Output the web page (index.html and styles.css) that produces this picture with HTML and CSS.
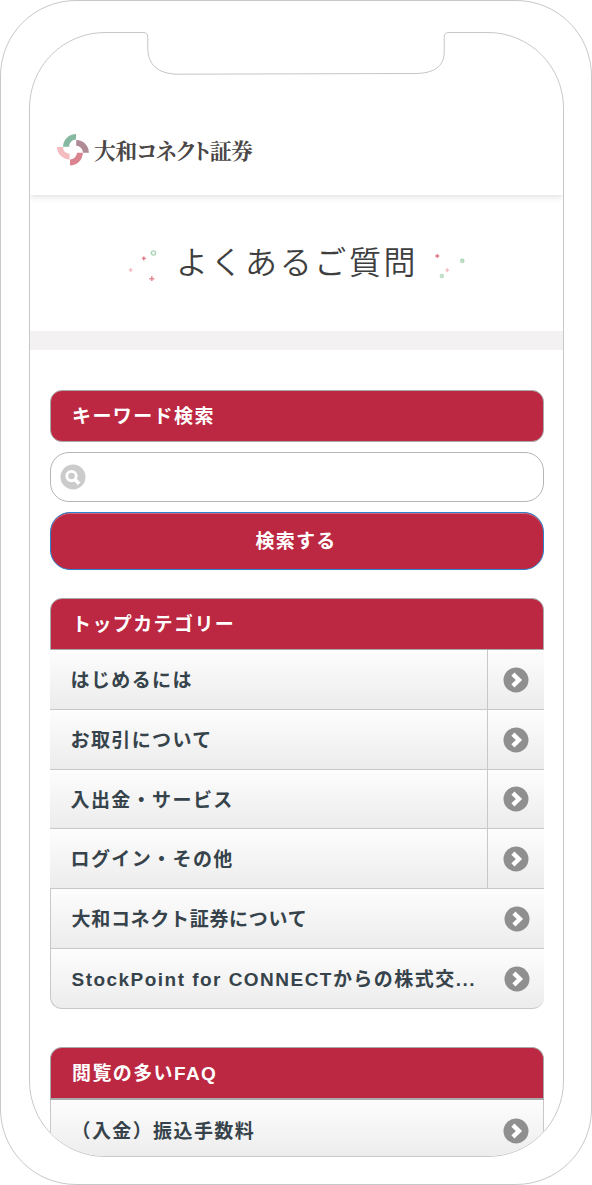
FILE: index.html
```
<!DOCTYPE html>
<html lang="ja">
<head>
    <meta charset="UTF-8">
    <meta name="viewport" content="width=device-width, initial-scale=1.0">
    <title>よくあるご質問</title>
    <link rel="stylesheet" href="styles.css">
</head>
<body>
    <svg class="symbols" width="0" height="0">
        <symbol id="arrow" viewBox="0 0 26 26">
            <circle cx="13" cy="13" r="12.5" fill="#8f8f8f"/>
            <path d="M9.9 7.2L15.9 13L9.9 18.8" fill="none" stroke="#fff" stroke-width="4.4"/>
        </symbol>
    </svg>

    <div class="phone">
        <div class="screen">
            <header class="header">
                <svg class="logo-mark" width="32" height="32" viewBox="0 0 32 32">
                    <path d="M6 12.8A13 13 0 0 1 19 0V5.6A7.2 7.2 0 0 0 12 12.8Z" fill="#86b9a0"/>
                    <path d="M19.2 6A12.6 12.6 0 0 1 31.8 18.8H26A7 7 0 0 0 19.2 11.8Z" fill="#b08a94"/>
                    <path d="M13 31.6A12.8 12.8 0 0 0 25.8 18.8H20A7 7 0 0 1 13 25.6Z" fill="#da8490"/>
                    <path d="M0 13A12.8 12.8 0 0 0 12.6 25.6V19.8A6.8 6.8 0 0 1 5.9 13Z" fill="#f5bcc0"/>
                </svg>
                <span class="logo-text">大和コネクト証券</span>
            </header>

            <div class="title">
                <svg class="deco" width="30" height="36" viewBox="0 0 30 36" fill="none">
                    <circle cx="26.5" cy="8" r="2.1" stroke="#a9d4b5" stroke-width="1.4"/>
                    <path d="M16.8 11.4v4M14.8 13.4h4" stroke="#dd7686" stroke-width="1.4"/>
                    <path d="M3.7 22.9v4M1.7 24.9h4" stroke="#f2b9bf" stroke-width="1.3"/>
                    <path d="M24.8 31.2v5M22.3 33.7h5" stroke="#e08a96" stroke-width="1.6"/>
                </svg>
                <h1>よくあるご質問</h1>
                <svg class="deco" width="32" height="36" viewBox="0 0 32 36" fill="none">
                    <path d="M3.3 9v4M1.3 11h4" stroke="#dd7686" stroke-width="1.3"/>
                    <circle cx="28.3" cy="15.7" r="1.6" stroke="#a9d4b5" stroke-width="1.3" fill="#d4eada"/>
                    <path d="M13.3 23.2v4M11.3 25.2h4" stroke="#f2b9bf" stroke-width="1.3"/>
                    <circle cx="7.8" cy="31" r="1.6" stroke="#b9dcc3" stroke-width="1.3" fill="#c9e5d1"/>
                </svg>
            </div>

            <main class="content">
                <h2 class="bar bar-round">キーワード検索</h2>
                <div class="search">
                    <svg width="26" height="26" viewBox="0 0 26 26">
                        <circle cx="13" cy="13" r="12.5" fill="#cbcbcb"/>
                        <circle cx="11.5" cy="12.1" r="4.7" fill="none" stroke="#fff" stroke-width="2.9"/>
                        <path d="M14.8 15.4l4.4 4.4" stroke="#fff" stroke-width="3.6"/>
                    </svg>
                </div>
                <button class="submit">検索する</button>

                <section class="list">
                    <h2 class="bar">トップカテゴリー</h2>
                    <ul>
                        <li class="split"><a>はじめるには</a><span class="icon"><svg width="26" height="26"><use href="#arrow"/></svg></span></li>
                        <li class="split"><a>お取引について</a><span class="icon"><svg width="26" height="26"><use href="#arrow"/></svg></span></li>
                        <li class="split"><a>入出金・サービス</a><span class="icon"><svg width="26" height="26"><use href="#arrow"/></svg></span></li>
                        <li class="split"><a>ログイン・その他</a><span class="icon"><svg width="26" height="26"><use href="#arrow"/></svg></span></li>
                        <li class="single"><a class="tight">大和コネクト証券について</a><span class="icon"><svg width="26" height="26"><use href="#arrow"/></svg></span></li>
                        <li class="single last"><a class="wide">StockPoint for CONNECTからの株式交...</a><span class="icon"><svg width="26" height="26"><use href="#arrow"/></svg></span></li>
                    </ul>
                </section>

                <section class="list faq">
                    <h2 class="bar">閲覧の多いFAQ</h2>
                    <ul>
                        <li class="single"><a>（入金）振込手数料</a><span class="icon"><svg width="26" height="26"><use href="#arrow"/></svg></span></li>
                    </ul>
                </section>
            </main>
        </div>

        <svg class="notch" width="306" height="46" viewBox="0 0 306 46">
            <path d="M0 0V2.5C4 2.5 5 4.5 5 8.5V18C5 34 14 44.2 36 44.2L272 43.5C290 43.5 301.5 37 301.5 22V8.5C301.5 4.5 302 2.5 306 2.5V0Z" fill="#fff"/>
            <path d="M0 2.5C4 2.5 4.8 4.5 4.8 8.5V18C4.8 34 14 44.2 36 44.2L272 43.5C290 43.5 301.2 37 301.2 22V8.5C301.2 4.5 302 2.5 306 2.5" fill="none" stroke="#c4c4c4"/>
        </svg>
    </div>
</body>
</html>
```

FILE: styles.css
```
:root {
    --red: #bc2741;
    --line: #c8c8c8;
    --text: #36434b;
}

* {
    box-sizing: border-box;
}

body {
    margin: 0;
    background: #fff;
    color: var(--text);
    font-family: "Liberation Sans", "Noto Sans CJK JP", sans-serif;
}
h1, h2, ul {
    margin: 0;
    padding: 0;
}
ul {
    list-style: none;
}
.symbols {
    position: absolute;
}
.phone {
    position: relative;
    width: 592px;
    height: 1185px;
    padding: 31px 27px 27px 28px;
    border: 1px solid var(--line);
    border-radius: 76px;
    background: #fff;
    overflow: hidden;
}
.screen {
    height: 1125px;
    border: 1px solid var(--line);
    border-radius: 76px;
    overflow: hidden;
}
/* drawn over the top edge of the screen */
.notch {
    position: absolute;
    top: 29px;
    left: 142px;
}
.header {
    display: flex;
    align-items: center;
    height: 162px;
    padding: 72px 0 0 27px;
    box-shadow: 0 2px 6px rgba(0, 0, 0, 0.12);
}
.logo-text {
    margin-left: 5px;
    color: #4a4646;
    font-family: "Noto Serif CJK JP", "Noto Sans CJK JP", serif;
    font-size: 22px;
    font-weight: 700;
    letter-spacing: -0.75px;
    line-height: 32px;
    font-feature-settings: "palt";
    white-space: nowrap;
}
.title {
    display: flex;
    align-items: center;
    justify-content: center;
    height: 155px;
    border-bottom: 19px solid #f3f1f2;
}
.title h1 {
    margin: 0 16px 0 19px;
    color: #3e3e3e;
    font-size: 32px;
    font-weight: 350;
    letter-spacing: 2.6px;
    line-height: 48px;
    white-space: nowrap;
}
.content {
    padding: 40px 19px 0 20px;
}
.bar {
    height: 52px;
    padding-left: 21px;
    border: 1px solid #aaa;
    border-radius: 12px 12px 0 0;
    background: var(--red);
    color: #fff;
    font-size: 19px;
    font-weight: bold;
    letter-spacing: 1.4px;
    line-height: 52px;
}
.bar-round {
    border-radius: 12px;
}
.search {
    display: flex;
    align-items: center;
    height: 50px;
    margin-top: 10px;
    padding-left: 9px;
    border: 1.5px solid #b5b5b5;
    border-radius: 19px;
}
.submit {
    display: block;
    width: 100%;
    height: 58px;
    margin-top: 10px;
    padding: 0 2px 2px 0;
    border: 1px solid #2a83cc;
    border-radius: 20px;
    background: var(--red);
    box-shadow: inset 0 1px 0 rgba(255, 255, 255, 0.3);
    color: #fff;
    font: bold 19px/54px "Noto Sans CJK JP", sans-serif;
    letter-spacing: 1.3px;
}
.list {
    margin-top: 28px;
}
.list li {
    display: flex;
    height: 59.8px;
    border-bottom: 1px solid var(--line);
    background: linear-gradient(#fdfdfd, #ececec);
}
.list a {
    flex: 1;
    padding-left: 20.5px;
    font-size: 19px;
    font-weight: bold;
    letter-spacing: 1.4px;
    line-height: 61px;
    white-space: nowrap;
}
.list .tight {
    letter-spacing: 0.7px;
}
.list .wide {
    letter-spacing: 1.47px;
}
.icon {
    display: flex;
    align-items: center;
    justify-content: center;
    width: 57px;
    padding-top: 1px;
}
.split .icon {
    border-left: 1px solid var(--line);
}
.list .single {
    border-left: 1px solid var(--line);
}
.single .icon {
    width: 54px;
}
.list .last {
    border-radius: 0 0 12px 12px;
}
.faq {
    margin-top: 38px;
}
.faq .bar {
    height: 53px;
    border-bottom: 2px solid #aaa;
}
.faq .single {
    border-right: 1px solid var(--line);
}
.faq .icon {
    padding-top: 3px;
}
.faq a {
    line-height: 63px;
}
```
